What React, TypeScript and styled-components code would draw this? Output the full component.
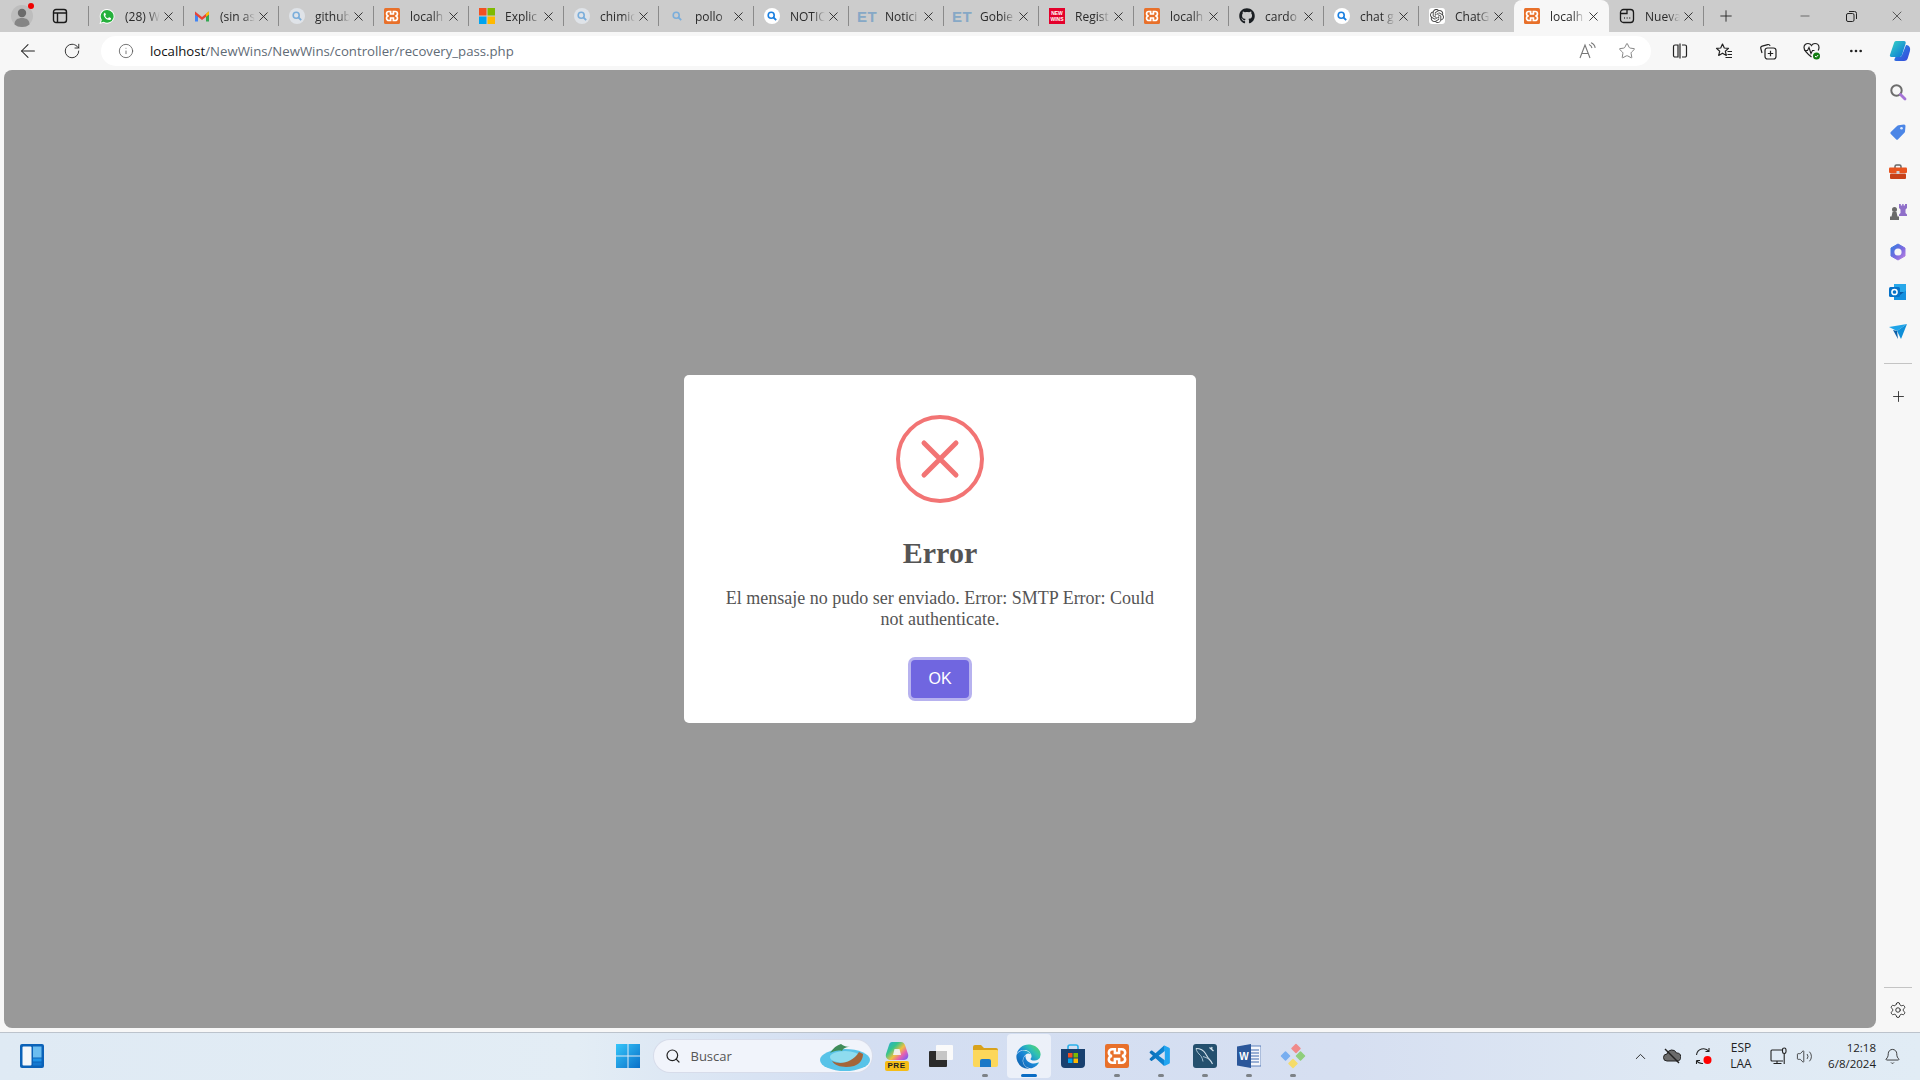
import React from "react";
import styled, {createGlobalStyle} from "styled-components";
import {ArrowLeft, Bell, ChevronUp, Info, Minus, MoreHorizontal, Plus, RotateCw, Search, Settings, Star, Volume2, X} from "lucide-react";
import {FaEdge, FaGithub} from "react-icons/fa";
import {SiOpenai} from "react-icons/si";
import {VscVscode} from "react-icons/vsc";

const GlobalStyle = createGlobalStyle`
  html, body {
    margin: 0;
    padding: 0;
    height: 100%;
    overflow: hidden;
    background: #f7f7f7;
  }
`;

const Screen = styled.div`
  width: 1920px;
  height: 1080px;
  display: flex;
  flex-direction: column;
  font-family: "Open Sans", "Noto Sans", sans-serif;
  color: #333;
`;

/* ---------- tab strip ---------- */

const TabStrip = styled.div`
  height: 32px;
  flex: none;
  display: flex;
  align-items: center;
  background: #cccccc;
`;

const Profile = styled.div`
  position: relative;
  width: 44px;
  display: flex;
  justify-content: center;
`;

const ProfileDot = styled.span`
  position: absolute;
  top: -2px;
  right: 10px;
  width: 6px;
  height: 6px;
  border-radius: 50%;
  background: #f00000;
`;

const TabActions = styled.div`
  width: 32px;
  display: flex;
  justify-content: center;
`;

const TabSeparator = styled.div`
  width: 1px;
  height: 20px;
  margin-left: 12px;
  background: #8a8a8a;
`;

const TabList = styled.div`
  display: flex;
  height: 32px;
`;

const TabItem = styled.div<{$active?: boolean; $hideSep?: boolean}>`
  position: relative;
  width: 95px;
  height: 32px;
  box-sizing: border-box;
  padding: 0 8px 0 10px;
  display: flex;
  align-items: center;
  background: ${p => (p.$active ? "#f7f7f7" : "transparent")};
  border-radius: ${p => (p.$active ? "8px 8px 0 0" : "0")};

  &::after {
    content: "";
    display: ${p => (p.$hideSep ? "none" : "block")};
    position: absolute;
    right: 0;
    top: 6px;
    height: 20px;
    width: 1px;
    background: #8a8a8a;
  }
`;

const Favicon = styled.span<{$tile?: boolean}>`
  width: 16px;
  height: 16px;
  flex: none;
  display: flex;
  align-items: center;
  justify-content: center;
  background: ${p => (p.$tile ? "#fff" : "transparent")};
  border-radius: 3px;
`;

const TabLabel = styled.span`
  flex: 1;
  margin-left: 10px;
  font-size: 12px;
  white-space: nowrap;
  overflow: hidden;
  color: #2a2a2a;
  -webkit-mask-image: linear-gradient(to right, #000 65%, transparent 100%);
  mask-image: linear-gradient(to right, #000 65%, transparent 100%);
`;

const TabClose = styled.span`
  width: 16px;
  height: 16px;
  flex: none;
  display: flex;
  align-items: center;
  justify-content: center;
  color: #222;
`;

const NewTab = styled.div`
  width: 44px;
  display: flex;
  justify-content: center;
  color: #222;
`;

const WindowControls = styled.div`
  margin-left: auto;
  display: flex;
  color: #222;
`;

const WindowButton = styled.div`
  width: 46px;
  height: 32px;
  display: flex;
  align-items: center;
  justify-content: center;
`;

/* ---------- toolbar ---------- */

const Toolbar = styled.div`
  height: 38px;
  flex: none;
  display: flex;
  align-items: center;
  padding: 0 0 0 6px;
  background: #f7f7f7;
`;

const ToolButton = styled.div`
  width: 44px;
  height: 30px;
  flex: none;
  display: flex;
  align-items: center;
  justify-content: center;
  color: #222;
`;

const AddressBar = styled.div`
  width: 1550px;
  height: 30px;
  flex: none;
  margin: 0 7px;
  box-sizing: border-box;
  padding: 0 15px 0 17px;
  display: flex;
  align-items: center;
  background: #fff;
  border-radius: 15px;
`;

const Url = styled.div`
  margin-left: 16px;
  font-size: 13.2px;
  color: #5f6b76;
  b {
    font-weight: 400;
    color: #111;
  }
`;

const BarIcons = styled.div`
  margin-left: auto;
  display: flex;
  align-items: center;
  gap: 20px;
  color: #777;
`;

/* ---------- page area ---------- */

const Middle = styled.div`
  flex: 1;
  min-height: 0;
  display: flex;
  background: #f7f7f7;
`;

const Viewport = styled.main`
  flex: 1;
  margin: 0 0 4px 4px;
  display: flex;
  align-items: center;
  justify-content: center;
  background: #999999;
  border-radius: 8px;
`;

const Modal = styled.div`
  width: 512px;
  height: 348px;
  box-sizing: border-box;
  padding-top: 40px;
  display: flex;
  flex-direction: column;
  align-items: center;
  background: #fff;
  border-radius: 5px;
  font-family: "Liberation Serif", serif;
  color: #545454;
`;

const Title = styled.h2`
  margin: 32px 0 0;
  font-size: 30px;
  line-height: 36px;
  font-weight: 700;
`;

const Message = styled.p`
  margin: 17px 0 0;
  width: 440px;
  text-align: center;
  font-size: 18px;
  line-height: 21px;
`;

const OkButton = styled.button`
  margin-top: 30px;
  width: 58px;
  height: 38px;
  padding: 0;
  border: 0;
  border-radius: 4px;
  background: #7066e0;
  box-shadow: 0 0 0 3px rgba(112, 102, 224, 0.5);
  color: #fff;
  font-family: "Liberation Sans", sans-serif;
  font-size: 16px;
`;

const SideBar = styled.aside`
  width: 44px;
  flex: none;
  display: flex;
  flex-direction: column;
  align-items: center;
  padding: 2px 0;
  box-sizing: border-box;
`;

const SideIcon = styled.div`
  width: 40px;
  height: 40px;
  flex: none;
  display: flex;
  align-items: center;
  justify-content: center;
  color: #222;
`;

const SideDivider = styled.div<{$flush?: boolean}>`
  width: 28px;
  height: 1px;
  flex: none;
  margin: ${p => (p.$flush ? "0 0 2px" : "11px 0 12px")};
  background: #c4c4c4;
`;

const SideSpacer = styled.div`
  flex: 1;
`;

/* ---------- taskbar ---------- */

const Taskbar = styled.footer`
  height: 48px;
  flex: none;
  box-sizing: border-box;
  padding-bottom: 1px;
  display: grid;
  grid-template-columns: 1fr auto 1fr;
  align-items: center;
  border-top: 1px solid #bcc3cc;
  background: linear-gradient(90deg, #dfeaf4 0%, #e3edf5 30%, #d3def2 44%, #d6dff1 70%, #dfe9f4 88%, #e1ecf5 100%);
`;

const TaskLeft = styled.div`
  padding-left: 20px;
  display: flex;
`;

const TaskCenter = styled.div`
  display: flex;
  align-items: center;
`;

const TaskCell = styled.div<{$running?: boolean; $active?: boolean}>`
  position: relative;
  width: 44px;
  height: 44px;
  display: flex;
  align-items: center;
  justify-content: center;
  border-radius: 4px;
  background: ${p => (p.$active ? "rgba(255,255,255,.55)" : "transparent")};

  &::after {
    content: "";
    display: ${p => (p.$running || p.$active ? "block" : "none")};
    position: absolute;
    bottom: 1px;
    left: 50%;
    transform: translateX(-50%);
    width: ${p => (p.$active ? "16px" : "6px")};
    height: 3px;
    border-radius: 2px;
    background: ${p => (p.$active ? "#0a6cc4" : "#7d8287")};
  }
`;

const SearchBox = styled.div`
  position: relative;
  width: 218px;
  height: 32px;
  margin: 0 3px 0 4px;
  box-sizing: border-box;
  padding-left: 11px;
  display: flex;
  align-items: center;
  gap: 10px;
  border-radius: 16px;
  background: #f1f4fb;
  box-shadow: 0 0 0 1px #d7dcea;
  font-size: 13px;
  color: #555;
`;

const SearchArt = styled.span`
  position: absolute;
  right: 1px;
  top: 0;
`;

const PreIcon = styled.span`
  position: relative;
  width: 28px;
  height: 30px;
  display: flex;
  justify-content: center;
`;

const PreBadge = styled.span`
  position: absolute;
  left: 2px;
  bottom: 0;
  width: 24px;
  height: 10px;
  border-radius: 2px;
  background: #f5bd17;
  color: #222;
  font-family: "Liberation Sans", sans-serif;
  font-weight: 700;
  font-size: 8px;
  line-height: 10px;
  letter-spacing: .5px;
  text-align: center;
`;

const Tray = styled.div`
  display: flex;
  align-items: center;
  justify-content: flex-end;
  color: #222;
  padding-right: 12px;
`;

const TrayIcon = styled.div<{$w?: number}>`
  width: ${p => p.$w ?? 32}px;
  display: flex;
  justify-content: center;
`;

const TrayText = styled.div<{$align?: string; $w?: number; $size?: number}>`
  width: ${p => p.$w ?? 40}px;
  text-align: ${p => p.$align ?? "center"};
  font-size: ${p => p.$size ?? 12}px;
  line-height: 16px;
  color: #222;
`;

/* ---------- drawn icons ---------- */

const ProfileIcon = () => (
    <svg width="22" height="22" viewBox="0 0 22 22">
        <circle cx="11" cy="11" r="11" fill="#bdbdbd"/>
        <circle cx="11" cy="8" r="4.200" fill="#6b6b6b"/>
        <path d="M3.500 19.500c0-4.500 3-6.500 7.500-6.500s7.500 2 7.500 6.500C16.500 21.200 14 22 11 22s-5.500-.8-7.500-2.500z" fill="#858585"/>
    </svg>
);

const TabActionsIcon = () => (
    <svg width="16" height="16" viewBox="0 0 16 16" fill="none" stroke="#1a1a1a" strokeWidth="1.400">
        <rect x="1.500" y="1.500" width="13" height="13" rx="2.500"/>
        <path d="M1.500 5h13M5.500 5v9.500"/>
    </svg>
);

const WhatsappIcon = () => (
    <svg width="17" height="17" viewBox="0 0 17 17">
        <path d="M8.700 .5a7.800 7.800 0 1 1-3.900 14.600L.5 16.500l1.400-4.200A7.800 7.800 0 0 1 8.700 .5z" fill="#fff"/>
        <path d="M8.700 1.500a6.800 6.800 0 1 1-3.700 12.500l-2.900.9.900-2.800A6.800 6.800 0 0 1 8.700 1.500z" fill="#25b03c"/>
        <path d="M6.300 4.500c-.5 0-1.300.7-1.300 2 0 2.700 3 5.800 5.800 5.800 1.300 0 2-.9 2-1.500 0-.4-.1-.6-.3-.7l-1.600-.8c-.3-.1-.5 0-.6.200l-.6.800c-.2.200-.4.200-.6.100-1-.4-2-1.300-2.500-2.400-.1-.2-.1-.4.100-.6l.5-.6c.1-.2.100-.4 0-.6l-.6-1.400c-.1-.2-.3-.3-.3-.3z" fill="#fff"/>
    </svg>
);

const GmailIcon = () => (
    <svg width="16" height="16" viewBox="0 0 16 16" fill="none">
        <path d="M1 3.500v10h3V7z" fill="#4285f4"/>
        <path d="M15 3.500v10h-3V7z" fill="#34a853"/>
        <path d="M1 3.500 8 9l7-5.500v3L8 12 1 6.500z" fill="#ea4335"/>
        <path d="M12 5.500 15 3.500V6.500l-3 2.300z" fill="#fbbc04"/>
    </svg>
);

const LensIcon = ({bg = "#dfe3e8", color = "#7baedb"}: {bg?: string; color?: string}) => (
    <svg width="16" height="16" viewBox="0 0 16 16" fill="none">
        <circle cx="8" cy="8" r="8" fill={bg}/>
        <circle cx="7.200" cy="7.200" r="3" stroke={color} strokeWidth="1.600"/>
        <path d="m9.500 9.500 2.700 2.700" stroke={color} strokeWidth="1.800"/>
    </svg>
);

const XamppIcon = ({size = 16}: {size?: number}) => (
    <svg width={size} height={size} viewBox="0 0 16 16" fill="none">
        <rect width="16" height="16" rx="1.500" fill="#e8702a"/>
        <path d="M4.800 3.500H6.600V6h2.800V3.500h1.800a2.250 2.250 0 0 1 0 4.500 2.250 2.250 0 0 1 0 4.500H9.400V10H6.600v2.500H4.800a2.250 2.250 0 0 1 0-4.500 2.250 2.250 0 0 1 0-4.500z" stroke="#fff" strokeWidth="1.700"/>
    </svg>
);

const MicrosoftIcon = () => (
    <svg width="16" height="16" viewBox="0 0 16 16">
        <rect width="7.500" height="7.500" fill="#f25022"/>
        <rect x="8.500" width="7.500" height="7.500" fill="#7fba00"/>
        <rect y="8.500" width="7.500" height="7.500" fill="#00a4ef"/>
        <rect x="8.500" y="8.500" width="7.500" height="7.500" fill="#ffb900"/>
    </svg>
);

const EtLogo = styled.span`
  font-family: "Liberation Sans", sans-serif;
  font-weight: 700;
  font-size: 15px;
  letter-spacing: .5px;
  color: #86a8c6;
`;

const NewWinsLogo = styled.span`
  width: 16px;
  height: 16px;
  display: flex;
  align-items: center;
  justify-content: center;
  background: #e4002b;
  color: #fff;
  font-family: "Liberation Sans", sans-serif;
  font-weight: 700;
  font-size: 5px;
  line-height: 6px;
  text-align: center;
`;

const ChatGptIcon = () => (
    <Favicon $tile>
        <SiOpenai size={14} color="#444"/>
    </Favicon>
);

const NewTabPageIcon = () => (
    <svg width="16" height="16" viewBox="0 0 16 16" fill="none" stroke="#1a1a1a" strokeWidth="1.300">
        <rect x="1.500" y="1.500" width="13" height="13" rx="3"/>
        <path d="M1.500 5.500H8v-4"/>
        <path d="M5 10h.8M7.700 10h.8M10.400 10h.8" strokeWidth="1.500"/>
    </svg>
);

const RestoreIcon = () => (
    <svg width="11" height="11" viewBox="0 0 11 11" fill="none" stroke="#222">
        <rect x=".5" y="2.500" width="7.500" height="8" rx="1.500"/>
        <path d="M3 .5h5.500a2 2 0 0 1 2 2V8"/>
    </svg>
);

const ReadAloudIcon = () => (
    <svg width="20" height="18" viewBox="0 0 20 18" fill="none" stroke="#777" strokeWidth="1.100">
        <path d="M2 16 7 3l5 13M3.700 11.500h6.600"/>
        <path d="M11 2.500c1.500.5 2.500 1.700 3 3.500M13 .8c2.200.7 3.700 2.500 4.200 5"/>
    </svg>
);

const SplitIcon = () => (
    <svg width="16" height="16" viewBox="0 0 16 16" fill="none" stroke="#222" strokeWidth="1.200">
        <path d="M6 2H3a1.500 1.500 0 0 0-1.500 1.500v9A1.500 1.500 0 0 0 3 14h3zM10 2h3a1.500 1.500 0 0 1 1.500 1.500v9A1.500 1.500 0 0 1 13 14h-3M8 .5v15"/>
    </svg>
);

const FavoritesIcon = () => (
    <svg width="18" height="18" viewBox="0 0 18 18" fill="none" stroke="#222" strokeWidth="1.200">
        <path d="M7.500 2 9.300 6l4.200.4-3.200 2.800 1 4.200-3.800-2.200-3.800 2.200 1-4.200L1.500 6.400 5.700 6z" strokeLinejoin="round"/>
        <path d="M12.500 9.500h4.500M12.500 12.500h4.500M10.500 15.500h6.500"/>
    </svg>
);

const CollectionsIcon = () => (
    <svg width="18" height="18" viewBox="0 0 18 18" fill="none" stroke="#222" strokeWidth="1.200">
        <path d="M3 11 1.800 6.500a2 2 0 0 1 1.400-2.400l5.500-1.500a2 2 0 0 1 2.400 1.300"/>
        <rect x="6" y="6" width="11" height="11" rx="2.500"/>
        <path d="M11.500 8.800v5.400M8.800 11.500h5.400"/>
    </svg>
);

const HealthIcon = () => (
    <svg width="20" height="20" viewBox="0 0 20 20" fill="none">
        <path d="M9.500 16C5 12.500 2 10 2 6.500 2 4 4 2.500 6 2.500c1.500 0 2.700.7 3.500 2 .8-1.300 2-2 3.500-2 2 0 4 1.500 4 4 0 1-.3 2-.8 3" stroke="#222" strokeWidth="1.200"/>
        <path d="M2.500 9.500h3l1.500-3 2 6 1.500-3h2" stroke="#222" strokeWidth="1.100"/>
        <circle cx="14.500" cy="15" r="3.500" fill="#107c10"/>
        <path d="m13 15 1.200 1.200 2-2.200" stroke="#fff"/>
    </svg>
);

const CopilotIcon = () => (
    <svg width="24" height="24" viewBox="0 0 24 24">
        <defs>
            <linearGradient id="cpA" x1="0" y1="0" x2="1" y2="1">
                <stop offset="0" stopColor="#37d7c4"/>
                <stop offset="1" stopColor="#0a6fd8"/>
            </linearGradient>
            <linearGradient id="cpB" x1="0" y1="0" x2="1" y2="1">
                <stop offset="0" stopColor="#1f8fe8"/>
                <stop offset="1" stopColor="#3b46d8"/>
            </linearGradient>
        </defs>
        <path d="M8 2h8c1.500 0 2 1 1.600 2.400L14 16c-.5 1.500-1.500 2-3 2H3.500C2 18 1.600 17 2 15.800L6 4C6.400 2.800 7 2 8 2z" fill="url(#cpA)"/>
        <path d="M18 6c2 0 3.500 1 4 3 .3 1.500 0 3-.5 4.500l-1.500 5C19.500 21 18 22 16 22H8c-1.500 0-1.900-1-1.500-2l1-2H11c1.500 0 2.500-.5 3-2z" fill="url(#cpB)"/>
    </svg>
);

const SideSearchIcon = () => (
    <svg width="18" height="18" viewBox="0 0 18 18" fill="none">
        <circle cx="7.500" cy="7.500" r="5.200" stroke="#6d6d6d" strokeWidth="2"/>
        <path d="m11.500 11.500 4.500 4.500" stroke="#a573d6" strokeWidth="2.800" strokeLinecap="round"/>
    </svg>
);

const TagIcon = () => (
    <svg width="18" height="18" viewBox="0 0 18 18">
        <path d="M9.500 2.200 15 1.500a1.500 1.500 0 0 1 1.500 1.600L16 8.500a2 2 0 0 1-.6 1.200l-6.300 6.500a1.500 1.500 0 0 1-2.100 0L1.800 11a1.500 1.500 0 0 1 0-2.100l6.500-6.200a2 2 0 0 1 1.200-.5z" fill="#4c86e6"/>
        <circle cx="12.500" cy="5.200" r="1.300" fill="#dce9ff"/>
    </svg>
);

const ToolboxIcon = () => (
    <svg width="18" height="18" viewBox="0 0 18 18" fill="none">
        <path d="M6 5V3.500A1.500 1.500 0 0 1 7.500 2h3A1.500 1.500 0 0 1 12 3.500V5" stroke="#666" strokeWidth="1.500"/>
        <rect y="4.500" width="18" height="5.500" rx="1" fill="#e8541f"/>
        <rect x="1" y="10.500" width="16" height="5.500" rx="1" fill="#c8421a"/>
        <rect x="7.500" y="8" width="3" height="3" rx=".5" fill="#cfd5dc"/>
    </svg>
);

const GamesIcon = () => (
    <svg width="18" height="18" viewBox="0 0 18 18">
        <path d="M10 1h1.800v1.500h1.400V1h1.400v1.500H16V1h2v4l-1.500 1.500V10l1.500 1.500V13h-8v-1.500l1.500-1.500V6.500L10 5z" fill="#8f6fc9"/>
        <circle cx="5.500" cy="6.500" r="2.500" fill="#6a6a6a"/>
        <path d="M3.500 9h4l1 4.500H10V17H1v-3.500h1.500z" fill="#6a6a6a"/>
    </svg>
);

const M365Icon = () => (
    <svg width="18" height="18" viewBox="0 0 18 18" fill="none">
        <defs>
            <linearGradient id="m3" x1="0" y1="0" x2="1" y2="1">
                <stop offset="0" stopColor="#2f7de0"/>
                <stop offset=".55" stopColor="#7a6ae0"/>
                <stop offset="1" stopColor="#c083e0"/>
            </linearGradient>
        </defs>
        <path d="M9 1 16 5v8l-7 4-7-4V5z" fill="url(#m3)" stroke="url(#m3)" strokeLinejoin="round"/>
        <circle cx="9" cy="9" r="3.600" fill="#f7f7f7"/>
    </svg>
);

const OutlookIcon = () => (
    <svg width="18" height="18" viewBox="0 0 18 18">
        <rect x="5" y="1" width="12" height="8" fill="#28a8ea"/>
        <rect x="5" y="9" width="12" height="8" rx="1" fill="#0a5ea8"/>
        <path d="M17 7.500 11 12 5 7.500V17h12z" fill="#1490df"/>
        <rect y="4" width="11" height="10" rx="1.500" fill="#0672c8"/>
        <circle cx="5.500" cy="9" r="2.600" fill="none" stroke="#fff" strokeWidth="1.500"/>
    </svg>
);

const SendIcon = () => (
    <svg width="18" height="16" viewBox="0 0 18 16">
        <path d="M0 3 18 0 8 7z" fill="#1fa4e8"/>
        <path d="M18 0 12 15 8 7z" fill="#0f8fd8"/>
        <path d="M4 6 8 7l1 8z" fill="#0b5fa8"/>
    </svg>
);

const WidgetsIcon = () => (
    <svg width="24" height="24" viewBox="0 0 24 24">
        <rect width="24" height="24" rx="2" fill="#0b62b8"/>
        <rect x="2.500" y="2.500" width="9" height="19" rx="1" fill="#f4f7fa"/>
        <rect x="13" y="2.500" width="8.500" height="11" fill="#6bbdf0"/>
        <rect x="13" y="14.500" width="8.500" height="3" fill="#1f93e8"/>
        <rect x="13" y="18.500" width="8.500" height="3" fill="#1478d0"/>
    </svg>
);

const WindowsIcon = () => (
    <svg width="24" height="24" viewBox="0 0 24 24">
        <defs>
            <linearGradient id="win" x1="0" y1="0" x2="1" y2="1">
                <stop offset="0" stopColor="#35c6fa"/>
                <stop offset="1" stopColor="#0a6fc8"/>
            </linearGradient>
        </defs>
        <path d="M0 0h11.500v11.500H0zM12.500 0H24v11.500H12.500zM0 12.500h11.500V24H0zM12.500 12.500H24V24H12.500z" fill="url(#win)"/>
    </svg>
);

const SearchArtIcon = () => (
    <svg width="52" height="32" viewBox="0 0 52 32">
        <ellipse cx="26" cy="20" rx="25" ry="11" fill="#58c3e8"/>
        <ellipse cx="26" cy="17" rx="15" ry="6" fill="#8fdcef"/>
        <path d="M13 21c8 4 20 2 27-9l4 2c0 5-3 10-9 12-9 2-18 1-22-5z" fill="#a4653a"/>
        <path d="M11 13c3-5 7-8 11-9 2 2 6 3 9 3-5 0-7 2-8 4-4-1-8 0-12 2z" fill="#3f8c5a"/>
    </svg>
);

const CopilotPreIcon = () => (
    <PreIcon>
        <svg width="26" height="26" viewBox="0 0 26 26">
            <defs>
                <linearGradient id="cpre" x1="0" y1="0" x2="1" y2=".8">
                    <stop offset="0" stopColor="#2aa8e0"/>
                    <stop offset=".35" stopColor="#34c48c"/>
                    <stop offset=".6" stopColor="#f0c040"/>
                    <stop offset=".8" stopColor="#e860b0"/>
                    <stop offset="1" stopColor="#8a5ce8"/>
                </linearGradient>
            </defs>
            <path d="M8 1h9c2 0 3 1 4 3l3 9c1 3-1 6-4 6H7c-3 0-6-2-5-6l3-9c.5-2 1.500-3 3-3z" fill="url(#cpre)"/>
            <path d="M10.500 8h5l1.500 6h-8z" fill="#f3f5fb" opacity=".9"/>
        </svg>
        <PreBadge>PRE</PreBadge>
    </PreIcon>
);

const FilesIcon = () => (
    <svg width="24" height="24" viewBox="0 0 24 24">
        <rect x="7" y="1" width="17" height="15" rx="1" fill="#fafafa"/>
        <rect x="0" y="7" width="18" height="16" rx="1" fill="#2b2b2b"/>
        <rect x="7" y="7" width="11" height="9" fill="#c6c6c6"/>
    </svg>
);

const FolderIcon = () => (
    <svg width="26" height="26" viewBox="0 0 26 26">
        <path d="M1 4a2 2 0 0 1 2-2h6l3 3h12a2 2 0 0 1 2 2v3H1z" fill="#d9a21b"/>
        <path d="M1 7h24a1 1 0 0 1 1 1v14a2 2 0 0 1-2 2H3a2 2 0 0 1-2-2z" fill="#fcd75a"/>
        <path d="M8 18a2 2 0 0 1 2-2h7a2 2 0 0 1 2 2v6H8z" fill="#1a78c8"/>
    </svg>
);

const EdgeIcon = () => (
    <>
        <svg width="0" height="0" style={{position: "absolute"}}>
            <defs>
                <linearGradient id="edgeFill" x1="0" y1="1" x2="1" y2="0">
                    <stop offset="0" stopColor="#0c59a4"/>
                    <stop offset=".45" stopColor="#1a86d8"/>
                    <stop offset=".7" stopColor="#2fc0b4"/>
                    <stop offset="1" stopColor="#62da58"/>
                </linearGradient>
            </defs>
        </svg>
        <FaEdge size={25} style={{fill: "url(#edgeFill)"}}/>
    </>
);

const StoreIcon = () => (
    <svg width="24" height="24" viewBox="0 0 24 24" fill="none">
        <path d="M7 5V3a2 2 0 0 1 2-2h6a2 2 0 0 1 2 2v2" stroke="#2ab0ea" strokeWidth="1.600"/>
        <path d="M0 5h24v15a4 4 0 0 1-4 4H4a4 4 0 0 1-4-4z" fill="#18406f"/>
        <rect x="7" y="9" width="4.500" height="4.500" fill="#f25022"/>
        <rect x="12.500" y="9" width="4.500" height="4.500" fill="#7fba00"/>
        <rect x="7" y="14.500" width="4.500" height="4.500" fill="#00a4ef"/>
        <rect x="12.500" y="14.500" width="4.500" height="4.500" fill="#ffb900"/>
    </svg>
);

const VsCodeIcon = () => (
    <>
        <svg width="0" height="0" style={{position: "absolute"}}>
            <defs>
                <linearGradient id="vsFill" x1="0" y1="0" x2="1" y2="0">
                    <stop offset="0" stopColor="#0a6fb8"/>
                    <stop offset=".7" stopColor="#0f86d4"/>
                    <stop offset=".71" stopColor="#22a5f0"/>
                    <stop offset="1" stopColor="#22a5f0"/>
                </linearGradient>
            </defs>
        </svg>
        <VscVscode size={25} style={{fill: "url(#vsFill)"}}/>
    </>
);

const MySqlIcon = () => (
    <svg width="24" height="24" viewBox="0 0 24 24" fill="none">
        <rect width="24" height="24" rx="3" fill="#24506e"/>
        <path d="M3 4.500c4 0 7.500 1.500 9.500 5 1.500 2.500 2 4 3.500 5.500 1 1 2.500 2.500 3.500 5" stroke="#d5e3ec" strokeWidth="1.100"/>
        <path d="M3 4.500c.5 3 2.500 5 4.500 7 1.500 1.500 2 4 2.500 6M10 12.500c2 .5 4 1.500 6 2.500" stroke="#b9cfdc" strokeWidth=".9"/>
        <path d="m16.500 3.500 4 3.500M19 3l-.5 2.500" stroke="#d5e3ec" strokeWidth="1.300"/>
    </svg>
);

const WordIcon = () => (
    <svg width="24" height="24" viewBox="0 0 24 24">
        <rect x="8" y="2" width="16" height="20" fill="#f4f6fb" stroke="#3f6ab0" strokeWidth=".8"/>
        <path d="M14 6h8M14 9h8M14 12h8M14 15h8M14 18h8" stroke="#3f6ab0" strokeWidth="1.200"/>
        <path d="M0 2.500 14 0v24L0 21.500z" fill="#2b579a"/>
        <text x="7" y="16" textAnchor="middle" fontFamily="Liberation Sans, sans-serif" fontWeight="700" fontSize="10" fill="#fff">W</text>
    </svg>
);

const DiamondsIcon = () => (
    <svg width="26" height="26" viewBox="0 0 26 26" strokeLinejoin="round" strokeWidth="1.500">
        <path d="M16 1.500 20 5.500l-4 4-4-4z" fill="#f08a8a" stroke="#f08a8a"/>
        <path d="M20.500 9 24.500 13l-4 4-4-4z" fill="#8fce7c" stroke="#8fce7c"/>
        <path d="M13 16.500 17 20.500l-4 4-4-4z" fill="#f5dc6a" stroke="#f5dc6a"/>
        <path d="M5.500 9 9.500 13l-4 4-4-4z" fill="#78aef0" stroke="#78aef0"/>
    </svg>
);

const CloudOffIcon = () => (
    <svg width="18" height="16" viewBox="0 0 18 16" fill="none">
        <path d="M4 13a3.500 3.500 0 0 1 0-7 5 5 0 0 1 9.500-1 4 4 0 0 1 .5 8z" fill="#6b6b6b" stroke="#222"/>
        <path d="m2 1 14 14" stroke="#222" strokeWidth="1.400"/>
    </svg>
);

const SyncAlertIcon = () => (
    <svg width="18" height="18" viewBox="0 0 18 18" fill="none" stroke="#222" strokeWidth="1.100">
        <path d="M1.500 8A7 7 0 0 1 14 4.500M14 1v3.500h-3.500M14.500 11"/>
        <path d="M1.500 13.500v3.500M1.500 13.500H5M1.500 13.500A7 7 0 0 0 8 16.500"/>
        <circle cx="12.500" cy="13" r="4" fill="#f00" stroke="none"/>
    </svg>
);

const NetworkIcon = () => (
    <svg width="18" height="18" viewBox="0 0 18 18" fill="none" stroke="#222" strokeWidth="1.100">
        <path d="M12 3H2a1 1 0 0 0-1 1v9a1 1 0 0 0 1 1h11"/>
        <path d="M7 14v2.500M3.500 16.500h8"/>
        <rect x="12.500" y="1" width="3.500" height="5.500" rx="1.700"/>
        <path d="M14.200 6.500v10.500"/>
    </svg>
);

const TABS = [
    {icon: <WhatsappIcon/>, label: "(28) W"},
    {icon: <GmailIcon/>, label: "(sin as"},
    {icon: <LensIcon/>, label: "github"},
    {icon: <XamppIcon/>, label: "localh"},
    {icon: <MicrosoftIcon/>, label: "Explic"},
    {icon: <LensIcon/>, label: "chimic"},
    {icon: <LensIcon bg="transparent"/>, label: "pollo"},
    {icon: <LensIcon bg="#fff" color="#1a7fe0"/>, label: "NOTIC"},
    {icon: <EtLogo>ET</EtLogo>, label: "Notici"},
    {icon: <EtLogo>ET</EtLogo>, label: "Gobie"},
    {icon: <NewWinsLogo>NEW<br/>WINS</NewWinsLogo>, label: "Regist"},
    {icon: <XamppIcon/>, label: "localh"},
    {icon: <FaGithub size={16} color="#1b1f23"/>, label: "cardo"},
    {icon: <LensIcon bg="#fff" color="#1a7fe0"/>, label: "chat g"},
    {icon: <ChatGptIcon/>, label: "ChatG"},
    {icon: <XamppIcon/>, label: "localh", active: true},
    {icon: <NewTabPageIcon/>, label: "Nueva"},
];

const SIDE_ICONS = [<SideSearchIcon/>, <TagIcon/>, <ToolboxIcon/>, <GamesIcon/>, <M365Icon/>, <OutlookIcon/>, <SendIcon/>];

export default function App(): JSX.Element {
    return <Screen>
        <GlobalStyle/>
        <TabStrip>
            <Profile><ProfileIcon/><ProfileDot/></Profile>
            <TabActions><TabActionsIcon/></TabActions>
            <TabSeparator/>
            <TabList>
                {TABS.map((tab, i) => (
                    <TabItem key={i} $active={tab.active} $hideSep={tab.active || TABS[i + 1]?.active}>
                        <Favicon>{tab.icon}</Favicon>
                        <TabLabel>{tab.label}</TabLabel>
                        <TabClose><X size={15} strokeWidth={1.4}/></TabClose>
                    </TabItem>
                ))}
            </TabList>
            <NewTab><Plus size={18} strokeWidth={1.2}/></NewTab>
            <WindowControls>
                <WindowButton><Minus size={14} strokeWidth={1}/></WindowButton>
                <WindowButton><RestoreIcon/></WindowButton>
                <WindowButton><X size={16} strokeWidth={1}/></WindowButton>
            </WindowControls>
        </TabStrip>
        <Toolbar>
            <ToolButton><ArrowLeft size={22} strokeWidth={1.1}/></ToolButton>
            <ToolButton><RotateCw size={18} strokeWidth={1.2}/></ToolButton>
            <AddressBar>
                <Info size={16} strokeWidth={1.2} color="#555"/>
                <Url><b>localhost</b>/NewWins/NewWins/controller/recovery_pass.php</Url>
                <BarIcons>
                    <ReadAloudIcon/>
                    <Star size={18} strokeWidth={1.2}/>
                </BarIcons>
            </AddressBar>
            <ToolButton><SplitIcon/></ToolButton>
            <ToolButton><FavoritesIcon/></ToolButton>
            <ToolButton><CollectionsIcon/></ToolButton>
            <ToolButton><HealthIcon/></ToolButton>
            <ToolButton><MoreHorizontal size={16} strokeWidth={2}/></ToolButton>
            <ToolButton><CopilotIcon/></ToolButton>
        </Toolbar>
        <Middle>
            <Viewport>
                <Modal>
                    <svg width="88" height="88" viewBox="0 0 88 88" fill="none" stroke="#f27474">
                        <circle cx="44" cy="44" r="42" strokeWidth="4"/>
                        <path d="M28 28 60 60M60 28 28 60" strokeWidth="5" strokeLinecap="round"/>
                    </svg>
                    <Title>Error</Title>
                    <Message>El mensaje no pudo ser enviado. Error: SMTP Error: Could not authenticate.</Message>
                    <OkButton>OK</OkButton>
                </Modal>
            </Viewport>
            <SideBar>
                {SIDE_ICONS.map((icon, i) => <SideIcon key={i}>{icon}</SideIcon>)}
                <SideDivider/>
                <SideIcon><Plus size={17} strokeWidth={1.2}/></SideIcon>
                <SideSpacer/>
                <SideDivider $flush/>
                <SideIcon><Settings size={18} strokeWidth={1.2}/></SideIcon>
            </SideBar>
        </Middle>
        <Taskbar>
            <TaskLeft><WidgetsIcon/></TaskLeft>
            <TaskCenter>
                <TaskCell><WindowsIcon/></TaskCell>
                <SearchBox>
                    <Search size={16} strokeWidth={1.8} color="#222"/>
                    Buscar
                    <SearchArt><SearchArtIcon/></SearchArt>
                </SearchBox>
                <TaskCell><CopilotPreIcon/></TaskCell>
                <TaskCell><FilesIcon/></TaskCell>
                <TaskCell $running><FolderIcon/></TaskCell>
                <TaskCell $active><EdgeIcon/></TaskCell>
                <TaskCell><StoreIcon/></TaskCell>
                <TaskCell $running><XamppIcon size={24}/></TaskCell>
                <TaskCell $running><VsCodeIcon/></TaskCell>
                <TaskCell $running><MySqlIcon/></TaskCell>
                <TaskCell $running><WordIcon/></TaskCell>
                <TaskCell $running><DiamondsIcon/></TaskCell>
            </TaskCenter>
            <Tray>
                <TrayIcon $w={28}><ChevronUp size={17} strokeWidth={1.3}/></TrayIcon>
                <TrayIcon $w={36}><CloudOffIcon/></TrayIcon>
                <TrayIcon $w={28}><SyncAlertIcon/></TrayIcon>
                <TrayText $w={46}>ESP<br/>LAA</TrayText>
                <TrayIcon $w={30}><NetworkIcon/></TrayIcon>
                <TrayIcon $w={20}><Volume2 size={17} strokeWidth={1.1}/></TrayIcon>
                <TrayText $align="right" $w={62} $size={11.5}>12:18<br/>6/8/2024</TrayText>
                <TrayIcon><Bell size={17} strokeWidth={1.2}/></TrayIcon>
            </Tray>
        </Taskbar>
    </Screen>
}
